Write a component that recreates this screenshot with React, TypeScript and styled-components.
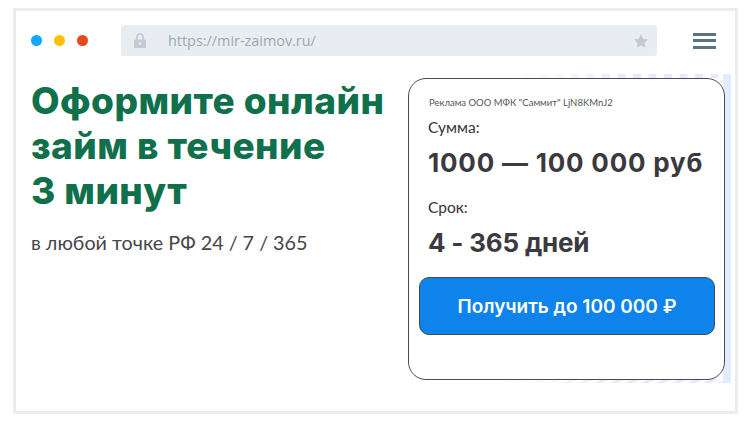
import React from "react";
import styled, { createGlobalStyle } from "styled-components";

const Global = createGlobalStyle`
  html, body { margin: 0; padding: 0; background: #fff; }
  * { box-sizing: border-box; }
`;

const Page = styled.div`
  width: 751px;
  height: 427px;
  padding: 8px 13px 13px;
  font-family: "Inter", "Noto Sans", sans-serif;
`;

const Frame = styled.div`
  width: 725px;
  height: 406px;
  border: 3px solid #e9edf2;
  display: flex;
  flex-direction: column;
  padding: 14px 0 0 15px;
`;

const TopBar = styled.div`
  display: flex;
  align-items: center;
  height: 31px;
`;

const Dots = styled.div`
  display: flex;
  gap: 12px;
  width: 90px;
`;

const Dot = styled.span<{ $color: string }>`
  width: 11px;
  height: 11px;
  border-radius: 50%;
  background: ${(p) => p.$color};
`;

const AddressBar = styled.div`
  width: 536px;
  height: 31px;
  background: #e9edf1;
  border-radius: 3px;
  display: flex;
  align-items: center;
  padding: 0 9px 0 13px;
`;

const UrlText = styled.span`
  margin-left: 22px;
  flex: 1;
  font-family: "Open Sans", sans-serif;
  font-size: 14.4px;
  color: #9aa8b4;
`;

const Burger = styled.div`
  margin-left: 36px;
  width: 23px;
  display: flex;
  flex-direction: column;
  gap: 3.5px;
`;

const BurgerLine = styled.span`
  height: 3px;
  background: #5a7486;
`;

const Content = styled.div`
  display: flex;
  padding-top: 22px;
`;

const Left = styled.div`
  width: 377px;
`;

const Heading = styled.h1`
  margin: 0;
  font-family: "Inter", sans-serif;
  font-weight: 800;
  font-size: 37px;
  letter-spacing: 0.45px;
  line-height: 45px;
  color: #10704c;
  white-space: nowrap;
`;

const Sub = styled.p`
  margin: 17px 0 0;
  font-family: "Lato", sans-serif;
  font-size: 19.75px;
  line-height: 26px;
  color: #45454c;
`;

const CardWrap = styled.div`
  position: relative;
  width: 317px;
  height: 302px;
`;

const Stripes = styled.svg`
  position: absolute;
  left: 95px;
  top: -4px;
`;

const Card = styled.div`
  position: relative;
  height: 100%;
  background: #fff;
  border: 1px solid #4a4a4f;
  border-radius: 18px;
  padding: 18px 9px 0 10px;
  display: flex;
  flex-direction: column;
`;

const Ad = styled.div`
  font-family: "Lato", sans-serif;
  font-size: 9.5px;
  line-height: 12px;
  color: #55555c;
  margin-left: 10px;
`;

const Label = styled.div`
  font-family: "Lato", sans-serif;
  font-size: 15.5px;
  line-height: 20px;
  color: #333339;
  margin: 8px 0 0 9px;
`;

const Value = styled.div<{ $spacing: number }>`
  font-family: "Inter", sans-serif;
  font-weight: 700;
  font-size: 26px;
  letter-spacing: ${(p) => p.$spacing}px;
  line-height: 32px;
  color: #3a3a40;
  margin: 10px 0 10px 9px;
  white-space: nowrap;
`;

const Cta = styled.button`
  height: 58px;
  margin-top: 8px;
  border: 1px solid #3f4a55;
  border-radius: 10px;
  background: #0f83ec;
  color: #fff;
  font-family: "Inter", sans-serif;
  font-weight: 600;
  font-size: 19px;
`;

const LockIcon = () => (
  <svg width="12" height="15" viewBox="0 0 12 15">
    <path d="M3 7V4a3 3 0 0 1 6 0v3" fill="none" stroke="#c2cbd3" strokeWidth="1.7" />
    <path fillRule="evenodd" fill="#c2cbd3" d="M1 6.500h10a1 1 0 0 1 1 1V14a1 1 0 0 1-1 1H1a1 1 0 0 1-1-1V7.500a1 1 0 0 1 1-1zM6 9.400a1.300 1.300 0 1 0 0 2.600a1.300 1.300 0 0 0 0-2.600z" />
  </svg>
);

const StarIcon = () => (
  <svg width="14" height="14" viewBox="0 0 24 23">
    <path fill="#c2cbd3" d="M12 0l3.700 7.600 8.300 1.200-6 5.900 1.400 8.300L12 19l-7.400 4L6 14.700 0 8.800l8.300-1.200z" />
  </svg>
);

const stripeXs = Array.from({ length: 15 }, (_, i) => 6 + i * 15.500);

const BackStripes = () => (
  <Stripes width="228" height="310" viewBox="0 0 228 310">
    {stripeXs.map((x, i) => {
      const opacity = Math.min(1, 0.12 + i * 0.11);
      return (
        <React.Fragment key={x}>
          <rect x={x} y="0" width="8" height="4" fill="#e3ecfd" opacity={opacity} />
          <polygon points={`${x - 8},309 ${x},305 ${x + 8},305 ${x},309`} fill="#e3ecfd" opacity={opacity} />
        </React.Fragment>
      );
    })}
    <rect x="220" y="0" width="8" height="309" fill="#e3ecfd" />
  </Stripes>
);

export default function App() {
  return (
    <Page>
      <Global />
      <Frame>
        <TopBar>
          <Dots>
            <Dot $color="#0ea9fb" />
            <Dot $color="#fdc00d" />
            <Dot $color="#e64a1c" />
          </Dots>
          <AddressBar>
            <LockIcon />
            <UrlText>https://mir-zaimov.ru/</UrlText>
            <StarIcon />
          </AddressBar>
          <Burger>
            <BurgerLine />
            <BurgerLine />
            <BurgerLine />
          </Burger>
        </TopBar>
        <Content>
          <Left>
            <Heading>
              Оформите онлайн
              <br />
              займ в течение
              <br />3 минут
            </Heading>
            <Sub>в любой точке РФ 24 / 7 / 365</Sub>
          </Left>
          <CardWrap>
            <BackStripes />
            <Card>
              <Ad>Реклама ООО МФК "Саммит" LjN8KMnJ2</Ad>
              <Label>Сумма:</Label>
              <Value $spacing={0.8}>1000 — 100 000 руб</Value>
              <Label>Срок:</Label>
              <Value $spacing={-0.2}>4 - 365 дней</Value>
              <Cta>Получить до 100 000 ₽</Cta>
            </Card>
          </CardWrap>
        </Content>
      </Frame>
    </Page>
  );
}
